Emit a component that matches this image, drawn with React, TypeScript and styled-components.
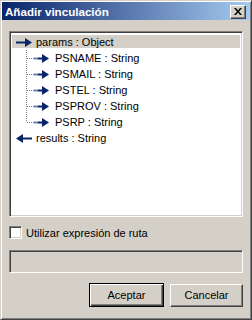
import React, { useState } from "react";
import styled, { createGlobalStyle, css } from "styled-components";

type Field = { name: string; type: string };

const params: Field[] = [
  { name: "PSNAME", type: "String" },
  { name: "PSMAIL", type: "String" },
  { name: "PSTEL", type: "String" },
  { name: "PSPROV", type: "String" },
  { name: "PSRP", type: "String" },
];

const NAVY = "#0a246a";

const RightArrow: React.FC = () => (
  <svg width="16" height="9" viewBox="0 0 16 9">
    <rect x="0" y="3.5" width="10" height="2" fill={NAVY} />
    <path d="M9 0 L16 4.5 L9 9 Z" fill={NAVY} />
  </svg>
);

const LeftArrow: React.FC = () => (
  <svg width="16" height="9" viewBox="0 0 16 9">
    <rect x="6" y="3.5" width="10" height="2" fill={NAVY} />
    <path d="M7 0 L0 4.5 L7 9 Z" fill={NAVY} />
  </svg>
);

// dotted tree connector + child arrow
const ChildIcon: React.FC<{ last: boolean }> = ({ last }) => (
  <svg width="24" height="16" viewBox="0 0 24 16">
    <line
      x1="0.5"
      y1="0"
      x2="0.5"
      y2={last ? 8 : 16}
      stroke="#808080"
      strokeDasharray="1 1"
    />
    <line x1="1" y1="8.5" x2="8" y2="8.5" stroke="#808080" strokeDasharray="1 1" />
    <rect x="8" y="7.5" width="4" height="2" fill="#6d7fb0" />
    <rect x="12" y="7.5" width="5" height="2" fill={NAVY} />
    <path d="M16 4 L23 8.5 L16 13 Z" fill={NAVY} />
  </svg>
);

const App: React.FC = () => {
  const [useExpr, setUseExpr] = useState(false);

  return (
    <>
      <GlobalStyle />
      <Window>
        <TitleBar>
          <Title>Añadir vinculación</Title>
          <CloseButton aria-label="Cerrar">
            <svg width="8" height="7" viewBox="0 0 8 7">
              <path d="M0 0 L2 0 L4 2.5 L6 0 L8 0 L5 3.5 L8 7 L6 7 L4 4.5 L2 7 L0 7 L3 3.5 Z" fill="#000" />
            </svg>
          </CloseButton>
        </TitleBar>

        <Body>
          <Tree>
            <Row $selected>
              <IconSlot>
                <RightArrow />
              </IconSlot>
              <Label>params : Object</Label>
            </Row>
            {params.map((p, i) => (
              <Row key={p.name} $child>
                <ChildIcon last={i === params.length - 1} />
                <ChildLabel>
                  {p.name} : {p.type}
                </ChildLabel>
              </Row>
            ))}
            <Row>
              <IconSlot>
                <LeftArrow />
              </IconSlot>
              <Label>results : String</Label>
            </Row>
          </Tree>

          <CheckRow onClick={() => setUseExpr(!useExpr)}>
            <CheckBox>{useExpr ? "✓" : ""}</CheckBox>
            <span>Utilizar expresión de ruta</span>
          </CheckRow>

          <PathField disabled={!useExpr} />

          <ButtonRow>
            <DialogButton $default>Aceptar</DialogButton>
            <DialogButton>Cancelar</DialogButton>
          </ButtonRow>
        </Body>
      </Window>
    </>
  );
};

export default App;

const GlobalStyle = createGlobalStyle`
  html, body {
    margin: 0;
    padding: 0;
    background: #d4d0c8;
  }
  body {
    font-family: "Liberation Sans", Arial, sans-serif;
    font-size: 11px;
    color: #000;
  }
`;

const sunken = css`
  border: 1px solid;
  border-color: #808080 #fff #fff #808080;
  box-shadow: inset 1px 1px 0 #404040, inset -1px -1px 0 #d4d0c8;
`;

const Window = styled.div`
  width: 252px;
  height: 320px;
  box-sizing: border-box;
  display: flex;
  flex-direction: column;
  background: #d4d0c8;
  border: 1px solid;
  border-color: #d4d0c8 #404040 #404040 #d4d0c8;
  box-shadow: inset 1px 1px 0 #fff, inset -1px -1px 0 #808080;
  padding: 1px 1px 0 1px;
`;

const TitleBar = styled.div`
  height: 18px;
  display: flex;
  align-items: center;
  justify-content: space-between;
  padding: 0 4px 0 3px;
  background: linear-gradient(to right, #0a246a, #a6caf0);
`;

const Title = styled.span`
  color: #fff;
  font-weight: bold;
  font-size: 11.6px;
  white-space: nowrap;
`;

const CloseButton = styled.button`
  width: 16px;
  height: 14px;
  padding: 0;
  margin-top: 1px;
  display: flex;
  align-items: center;
  justify-content: center;
  background: #d4d0c8;
  border: 1px solid;
  border-color: #fff #404040 #404040 #fff;
  box-shadow: inset -1px -1px 0 #808080;
`;

const Body = styled.div`
  flex: 1;
  display: flex;
  flex-direction: column;
  padding: 11px 7px 0 7px;
`;

const Tree = styled.div`
  ${sunken};
  height: 186px;
  box-sizing: border-box;
  background: #fff;
  padding: 2px 2px 0 2px;
`;

const Row = styled.div<{ $selected?: boolean; $child?: boolean }>`
  height: 16px;
  display: flex;
  align-items: center;
  white-space: nowrap;
  padding-left: ${(p) => (p.$child ? "14px" : "4px")};
  ${(p) =>
    p.$selected &&
    css`
      background: #d4d0c8;
      box-shadow: inset 0 1px 0 #fff, inset 0 -2px 0 #fff;
    `}
`;

const IconSlot = styled.span`
  width: 16px;
  height: 9px;
  display: inline-flex;
  margin-right: 4px;
`;

const Label = styled.span`
  line-height: 16px;
`;

const ChildLabel = styled.span`
  line-height: 16px;
  margin-left: 5px;
`;

const CheckRow = styled.label`
  display: flex;
  align-items: center;
  gap: 4px;
  margin-top: 9px;
  height: 13px;
  cursor: default;
`;

const CheckBox = styled.span`
  ${sunken};
  width: 13px;
  height: 13px;
  box-sizing: border-box;
  background: #fff;
  font-size: 10px;
  line-height: 11px;
  text-align: center;
`;

const PathField = styled.input`
  ${sunken};
  margin-top: 11px;
  height: 23px;
  box-sizing: border-box;
  background: #d4d0c8;
  padding: 0 4px;
  font: inherit;
  outline: none;
`;

const ButtonRow = styled.div`
  display: flex;
  justify-content: flex-end;
  align-items: center;
  gap: 6px;
  margin-top: 10px;
`;

const DialogButton = styled.button<{ $default?: boolean }>`
  font-family: "Liberation Sans", Arial, sans-serif;
  font-size: 11px;
  color: #000;
  background: #d4d0c8;
  padding: 0;
  box-sizing: border-box;
  ${(p) =>
    p.$default
      ? css`
          width: 75px;
          height: 24px;
          border: 1px solid #000;
          box-shadow: inset 1px 1px 0 #fff, inset -1px -1px 0 #404040,
            inset -2px -2px 0 #808080;
        `
      : css`
          width: 73px;
          height: 23px;
          border: 1px solid;
          border-color: #fff #404040 #404040 #fff;
          box-shadow: inset -1px -1px 0 #808080;
        `}
`;
